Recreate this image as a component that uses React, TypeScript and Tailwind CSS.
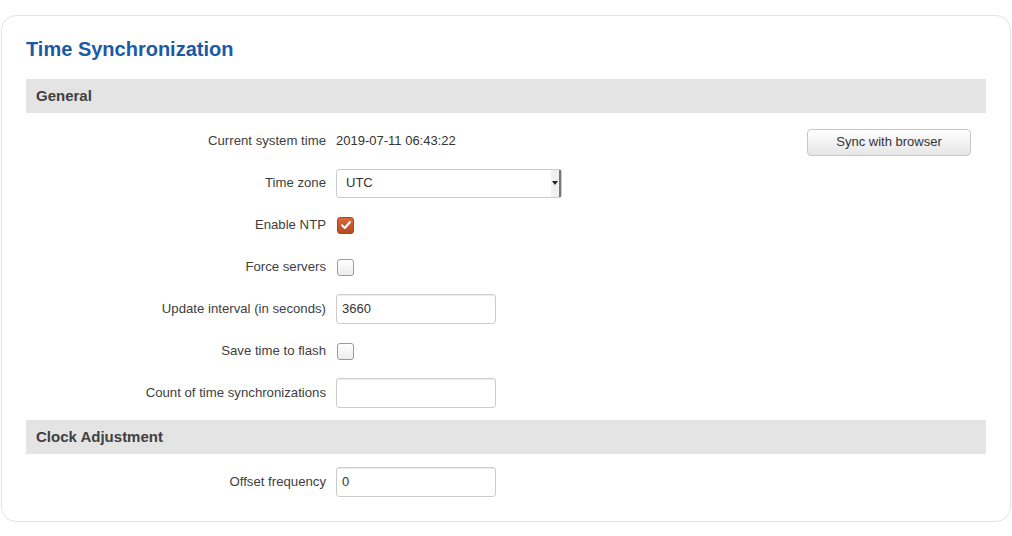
import { type ReactNode } from "react";

function Row({ label, children }: { label: string; children: ReactNode }) {
  return (
    <div className="flex h-[42px] items-center">
      <div className="w-[310px] shrink-0 pr-[10px] text-right text-[13.2px] text-[#404040]">{label}</div>
      <div className="flex flex-1 items-center">{children}</div>
    </div>
  );
}

function TextInput({ value }: { value: string }) {
  return (
    <div className="flex h-[30px] w-[160px] items-center rounded-[3px] border border-[#cccccc] bg-white pl-[5px] text-[13px] text-[#333] shadow-[inset_0_1px_1px_rgba(0,0,0,0.075)]">
      {value}
    </div>
  );
}

function Checkbox({ checked }: { checked?: boolean }) {
  if (checked) {
    return (
      <div className="ml-[1px] flex h-[17px] w-[17px] items-center justify-center rounded-[3px] border border-[#a8461f] bg-gradient-to-b from-[#d9693b] to-[#b84a20]">
        <svg width="12" height="12" viewBox="0 0 12 12">
          <path d="M2 6.2 L4.8 9 L10 3" fill="none" stroke="white" strokeWidth="2" strokeLinecap="round" strokeLinejoin="round" />
        </svg>
      </div>
    );
  }
  return <div className="ml-[1px] h-[17px] w-[17px] rounded-[3px] border border-[#9a9a9a] bg-gradient-to-b from-white to-[#ececec]" />;
}

function SectionHeader({ title }: { title: string }) {
  return (
    <div className="flex h-[34px] items-center bg-[#e4e4e4] pl-[10px] text-[15px] font-bold text-[#404040]">{title}</div>
  );
}

export default function App() {
  return (
    <div className="bg-white pt-[15px] font-['Liberation_Sans',Arial,sans-serif]" style={{ height: 536 }}>
      <div className="ml-[1px] w-[1010px] rounded-[15px] border border-[#e3e3e3] px-[24px] pb-[18px] pt-[21px]">
        <h2 className="text-[20px] font-bold leading-[24px] text-[#1d5aa4]">Time Synchronization</h2>

        <div className="mt-[18px]">
          <SectionHeader title="General" />
          <div className="pt-[7px]">
            <Row label="Current system time">
              <span className="text-[13px] text-[#333]">2019-07-11 06:43:22</span>
              <button className="ml-auto mr-[15px] mt-[2px] h-[27px] w-[164px] rounded-[4px] border border-[#c6c6c6] bg-gradient-to-b from-white to-[#e6e6e6] text-[13px] text-[#333]">
                Sync with browser
              </button>
            </Row>
            <Row label="Time zone">
              <div className="flex h-[29px] w-[226px] items-center rounded-[3px] border border-[#cccccc] bg-white text-[13px] text-[#333]">
                <span className="flex-1 pl-[9px]">UTC</span>
                <div className="flex h-full w-[10px] items-center justify-center border-r-2 border-[#777] bg-[#f0f0f0]">
                  <svg width="6" height="4" viewBox="0 0 6 4">
                    <path d="M0 0 L6 0 L3 4 Z" fill="#222" />
                  </svg>
                </div>
              </div>
            </Row>
            <Row label="Enable NTP">
              <Checkbox checked />
            </Row>
            <Row label="Force servers">
              <Checkbox />
            </Row>
            <Row label="Update interval (in seconds)">
              <TextInput value="3660" />
            </Row>
            <Row label="Save time to flash">
              <Checkbox />
            </Row>
            <Row label="Count of time synchronizations">
              <TextInput value="" />
            </Row>
          </div>
        </div>

        <div className="mt-[6px]">
          <SectionHeader title="Clock Adjustment" />
          <div className="pt-[7px]">
            <Row label="Offset frequency">
              <TextInput value="0" />
            </Row>
          </div>
        </div>
      </div>
    </div>
  );
}
